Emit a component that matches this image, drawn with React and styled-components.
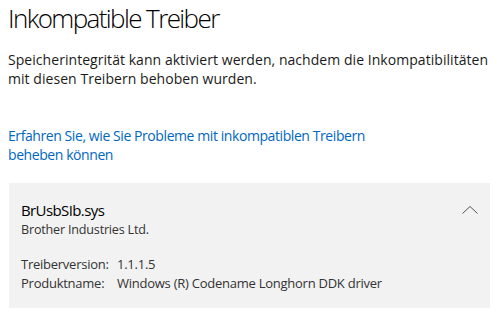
import React from "react";
import styled, { createGlobalStyle } from "styled-components";

const Global = createGlobalStyle`
  html, body {
    margin: 0;
    padding: 0;
    background: #ffffff;
    font-family: "Open Sans", "Noto Sans", sans-serif;
    color: #000;
  }
`;

const Page = styled.div`
  width: 497px;
  height: 315px;
  padding: 0 7px 0 8px;
  box-sizing: border-box;
  overflow: hidden;
`;

const Title = styled.h1`
  margin: 0;
  padding-top: 1px;
  font-size: 26px;
  font-weight: 300;
  line-height: 34px;
  letter-spacing: -1.6px;
  color: #000;
`;

const Intro = styled.p`
  margin: 15px 0 0;
  font-size: 14px;
  line-height: 19px;
  letter-spacing: 0.05px;
  color: #1a1a1a;
  white-space: nowrap;
`;

const Link = styled.a`
  display: block;
  margin: 38px 0 0;
  font-size: 14px;
  line-height: 19px;
  letter-spacing: -0.42px;
  color: #0067c0;
  text-decoration: none;
  white-space: nowrap;
`;

const Card = styled.div`
  margin: 19px 0 0 1px;
  background: #f2f2f2;
  padding: 17px 12px 15px 12px;
  width: 481px;
  box-sizing: border-box;
`;

const CardHead = styled.div`
  display: flex;
  justify-content: space-between;
  align-items: flex-start;
`;

const FileName = styled.div`
  font-size: 15px;
  line-height: 20px;
  color: #000;
  letter-spacing: -0.6px;
`;

const Vendor = styled.div`
  font-size: 12.6px;
  line-height: 19px;
  color: #333;
  letter-spacing: -0.2px;
`;

const Chevron = styled.svg`
  margin-top: 6px;
`;

const Details = styled.div`
  display: grid;
  grid-template-columns: 96px auto;
  margin-top: 16px;
  font-size: 13px;
  line-height: 19px;
  color: #333;
  letter-spacing: -0.25px;
`;

export default function App() {
  return (
    <Page>
      <Global />
      <Title>Inkompatible Treiber</Title>
      <Intro>
        Speicherintegrität kann aktiviert werden, nachdem die Inkompatibilitäten
        <br />
        mit diesen Treibern behoben wurden.
      </Intro>
      <Link href="#">
        Erfahren Sie, wie Sie Probleme mit inkompatiblen Treibern
        <br />
        beheben können
      </Link>
      <Card>
        <CardHead>
          <div>
            <FileName>BrUsbSIb.sys</FileName>
            <Vendor>Brother Industries Ltd.</Vendor>
          </div>
          <Chevron width="16" height="8" viewBox="0 0 16 8">
            <path d="M0.5 7.5 L8 0.5 L15.5 7.5" fill="none" stroke="#555" strokeWidth="1" />
          </Chevron>
        </CardHead>
        <Details>
          <span>Treiberversion:</span>
          <span>1.1.1.5</span>
          <span>Produktname:</span>
          <span>Windows (R) Codename Longhorn DDK driver</span>
        </Details>
      </Card>
    </Page>
  );
}
